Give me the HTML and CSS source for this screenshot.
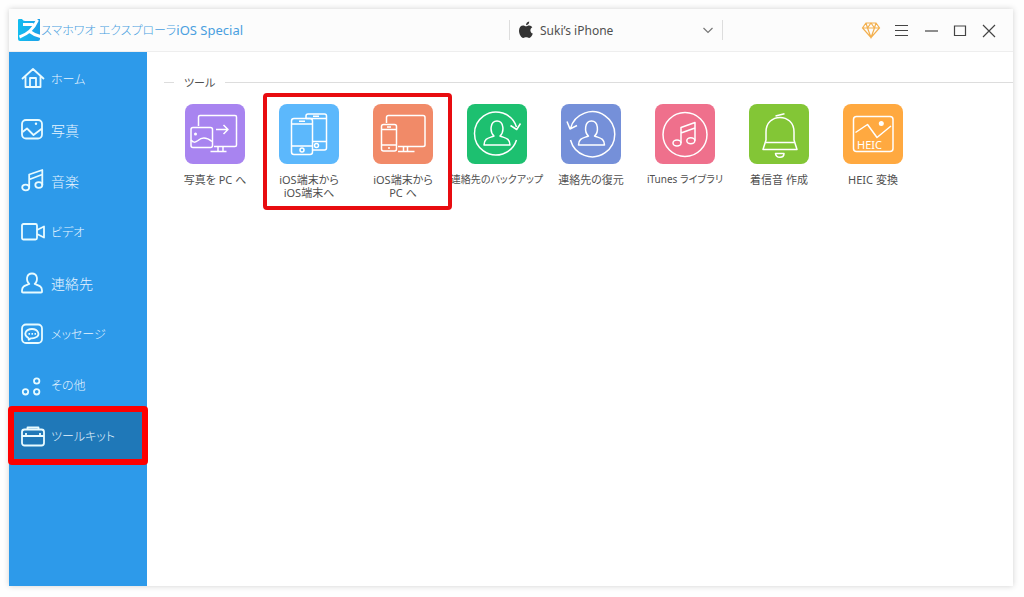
FILE: index.html
```html
<!DOCTYPE html>
<html lang="ja">
<head>
<meta charset="utf-8">
<meta name="viewport" content="width=device-width, initial-scale=1">
<title>スマホワオ エクスプローラ iOS Special</title>
<link rel="stylesheet" href="styles.css">
</head>
<body>
<div class="window">
  <header class="titlebar">
    <h1 class="brand">
      <svg class="brand-logo" viewBox="0 0 24 24" aria-hidden="true">
        <defs><linearGradient id="logo" x1="0" x2="1"><stop offset="0" stop-color="#12bdf0"/><stop offset="1" stop-color="#1ea0e8"/></linearGradient></defs>
        <path fill="url(#logo)" d="M1 2Q1 1 2 1H5Q6 3 8 3H18Q20 3 21 1H23V21Q23 23 21 23H3Q1 23 1 21Z"/>
        <path fill="none" stroke="#fff" stroke-width="3" d="M6 6.500H16.500M20.500 2C17 10 11 16 2.500 19M12 13Q17 17 23.500 18.500"/>
      </svg>
      <span class="compact">スマホワオ エクスプローラ</span>
      <span class="brand-edition">iOS Special</span>
    </h1>
    <div class="device">
      <svg class="device-logo" viewBox="0 0 16 18" aria-hidden="true"><path fill="#333" d="M11.200 0.500Q11.300 3.700 8 4.300Q8 1.300 11.200 0.500ZM8 5.300C9 5.300 9.700 4.500 11.200 4.500Q13.300 4.600 14.300 6.200C11.500 8 12 11.500 14.800 12.600C14 14.900 12.700 16.900 11.200 16.900C10 16.900 9.500 16.200 8.200 16.200S6.300 16.900 5.200 16.900C3.200 16.900 1 13.200 1 9.800C1 6.400 3 4.500 5.100 4.500C6.500 4.500 7.200 5.300 8 5.300Z"/></svg>
      <select class="device-select" aria-label="デバイス"><option>Suki’s iPhone</option></select>
      <svg class="device-arrow" viewBox="0 0 12 12" aria-hidden="true"><path fill="none" stroke="#777" stroke-width="1.200" d="M1.500 4L6 8.500L10.500 4"/></svg>
    </div>
    <div class="controls">
      <button class="control gem" aria-label="購入"><svg viewBox="0 0 20 20"><path d="M5 3H15L18.500 8L10 17.500L1.500 8ZM1.500 8H18.500M5 3L6.500 8L10 17.500L13.500 8L15 3M6.500 8L10 3L13.500 8"/></svg></button>
      <button class="control" aria-label="メニュー"><svg viewBox="0 0 20 20"><path d="M3 5.500H16M3 10.500H16M3 15.500H16"/></svg></button>
      <button class="control" aria-label="最小化"><svg viewBox="0 0 20 20"><path d="M4 11H17"/></svg></button>
      <button class="control" aria-label="最大化"><svg viewBox="0 0 20 20"><path d="M4.500 6H15.500V15.500H4.500Z"/></svg></button>
      <button class="control" aria-label="閉じる"><svg viewBox="0 0 20 20"><path d="M4 5L16 17M16 5L4 17"/></svg></button>
    </div>
  </header>
  <div class="body">
    <nav class="sidebar">
      <a class="nav-item compact" href="#home"><svg class="nav-icon" viewBox="0 0 24 24"><path d="M1 12L12 2L23 12M4.500 9.500V20H19.500V9.500M9 19.500V11H15V19.500"/></svg>ホーム</a>
      <a class="nav-item" href="#photo"><svg class="nav-icon" viewBox="0 0 24 24"><rect x="1" y="2" width="20" height="18.500" rx="4"/><path d="M1.500 14L6 10.500L12.500 17L21 10.500"/><circle class="solid" cx="15" cy="5.800" r="1.200"/></svg>写真</a>
      <a class="nav-item" href="#music"><svg class="nav-icon" viewBox="0 0 24 24"><ellipse cx="4.700" cy="18.500" rx="3.500" ry="2.800"/><ellipse cx="17.800" cy="16" rx="3.500" ry="2.800"/><path d="M8.200 18.500V5.500L21.300 1V16M8.200 10.500L21.300 5.500"/></svg>音楽</a>
      <a class="nav-item compact" href="#video"><svg class="nav-icon" viewBox="0 0 24 24"><rect x="1" y="4" width="15" height="15.500" rx="1.500"/><path d="M16 10L23 6.500V17.500L16 14"/></svg>ビデオ</a>
      <a class="nav-item" href="#contacts"><svg class="nav-icon" viewBox="0 0 24 24"><path d="M8.300 13C4.500 9.500 5.500 2.500 11 2.500S17.500 9.500 13.700 13C17.500 14.500 21 15 21 19.500V21Q21 21.500 20 21.500H2Q1 21.500 1 21V19.500C1 15 4.500 14.500 8.300 13Z"/></svg>連絡先</a>
      <a class="nav-item compact" href="#messages"><svg class="nav-icon" viewBox="0 0 24 24"><rect x="1" y="2.500" width="20" height="18.500" rx="4"/><path d="M7.500 16C1.500 12.500 5 7 11 7S20 13 14.500 15.500Q12.500 16.500 10 16.300L7.800 17.800Z"/><path d="M7.500 11.800H9M10.500 11.800H12M13.500 11.800H15"/></svg>メッセージ</a>
      <a class="nav-item compact" href="#other"><svg class="nav-icon" viewBox="0 0 24 24"><circle cx="15.700" cy="8" r="2.700"/><circle cx="4.500" cy="18.800" r="2.700"/><circle cx="15.700" cy="18.800" r="2.700"/></svg>その他</a>
      <a class="nav-item compact selected" href="#toolkit" aria-current="page"><svg class="nav-icon" viewBox="0 0 24 24"><rect x="1" y="5.500" width="22" height="16" rx="2.500"/><path d="M1 12H23M5 12V9M19 12V9M6.500 5.500V3.500H17.500V5.500"/></svg>ツールキット</a>
    </nav>
    <main class="content">
      <h2 class="section-title">ツール</h2>
      <div class="tools">
        <button class="tool"><svg class="tile purple" viewBox="0 0 60 60"><path d="M13.500 22V13Q13.500 11.500 15 11.500H50Q51.500 11.500 51.500 13V41Q51.500 42.500 50 42.500H29M33 43V47M38 43V47M25.500 47.500H41.500M31 25.500H43M38.500 21L43 25.500L38.500 30"/><rect x="6" y="23.500" width="21.500" height="20" rx="2"/><path d="M6 36Q9 40 13 36.500Q19 31 27 37.500"/><circle class="solid" cx="10.500" cy="30" r="1.500"/></svg><span class="label">写真を PC へ</span></button>
        <button class="tool"><svg class="tile sky" viewBox="0 0 60 60"><path d="M27 14V12Q27 10 29 10H45.500Q47.500 10 47.500 12V44Q47.500 46 45.500 46H33.500M27 14.500H47M33.500 37.500H47M34 12.200H40"/><circle cx="37.500" cy="41.500" r="2"/><rect x="12.500" y="14.500" width="21" height="36" rx="2.500"/><path d="M12.500 20H33.500M12.500 42H33.500M20 17.300H26"/><circle cx="23" cy="46" r="2"/></svg><span class="label">iOS端末から<br>iOS端末へ</span></button>
        <button class="tool"><svg class="tile orange" viewBox="0 0 60 60"><path d="M13.500 19V13.500Q13.500 11.500 15.500 11.500H50Q52 11.500 52 13.500V41Q52 42.500 50 42.500H25M30.500 43V47M34.500 43V47M25 47.500H41.500"/><rect x="8.500" y="20.500" width="15" height="26.500" rx="2"/><path d="M8.500 25.500H23.500M8.500 41H23.500M14 23H18"/><circle class="solid" cx="16" cy="44" r="1"/></svg><span class="label">iOS端末から<br>PC へ</span></button>
        <button class="tool"><svg class="tile green" viewBox="0 0 60 60"><path d="M49.500 23A21.500 21.500 0 1 0 49.500 36M43.500 21.500L49.700 25.500L53.500 19.500"/><path d="M27 32C22.500 28 23 17 30 17S37.500 28 33 32C37 34 43 33.500 43 41H17C17 33.500 23 34 27 32Z"/></svg><span class="label label-long">連絡先のバックアップ</span></button>
        <button class="tool"><svg class="tile indigo" viewBox="0 0 60 60"><path d="M9.500 24.500A22.500 22.500 0 1 1 9.500 36M6 17.500L9 25L16 21.500"/><path d="M27.500 32C23 28 23.500 17 30.500 17S38 28 33.500 32C37.500 34 43.500 33.500 43.500 41H17.500C17.500 33.500 23.500 34 27.500 32Z"/></svg><span class="label">連絡先の復元</span></button>
        <button class="tool"><svg class="tile pink" viewBox="0 0 60 60"><circle cx="30" cy="30.500" r="22"/><ellipse cx="22" cy="39" rx="4" ry="3"/><ellipse cx="35.800" cy="36.700" rx="4" ry="3"/><path d="M26 39V23.500L40 18.500V36.700M26 29L40 24"/></svg><span class="label label-long">iTunes ライブラリ</span></button>
        <button class="tool"><svg class="tile lime" viewBox="0 0 60 60"><path d="M14 45.500L17 36V28C17 8.500 45 8.500 45 28V36L48 45.500ZM16.500 38.500H45.500M26.500 12L35.500 9.700M26.500 49.500H35C35 54.500 27 54.500 26.500 49.500Z"/></svg><span class="label">着信音 作成</span></button>
        <button class="tool"><svg class="tile amber" viewBox="0 0 60 60"><rect x="10.500" y="12.500" width="39.500" height="35" rx="3"/><path d="M12.500 28.500L24.500 20.500L34 33.500L48 22"/><circle class="solid" cx="38.300" cy="19.500" r="2.500"/><text x="14" y="45">HEIC</text></svg><span class="label">HEIC 変換</span></button>
        <div class="tools-mark"></div>
      </div>
    </main>
  </div>
</div>
</body>
</html>
```
FILE: styles.css
```css
* { box-sizing: border-box; }

body {
  margin: 0;
  padding: 9px 11px 11px 9px;
  min-height: 100vh;
  display: flex;
  background: #fefefe;
  color: #505050;
  font-family: "Noto Sans", "Noto Sans CJK JP", sans-serif;
  font-feature-settings: "palt";
}

button, select {
  border: 0;
  padding: 0;
  background: none;
  color: inherit;
  font: inherit;
  font-feature-settings: inherit;
}

.window {
  flex: 1;
  display: flex;
  flex-direction: column;
  background: #fff;
  box-shadow: 0 0 6px rgba(0, 0, 0, 0.18);
}

.titlebar {
  height: 43px;
  display: grid;
  grid-template-columns: 50fr 214px 29fr;
  align-items: center;
  background: #fcfcfc;
  border-bottom: 1px solid #eee;
}

.brand {
  margin: 0;
  padding-left: 8px;
  display: flex;
  align-items: center;
  color: #4a9fe0;
  font-size: 13px;
  font-weight: 400;
  white-space: nowrap;
}

.brand-logo { width: 24px; height: 24px; }

.device {
  height: 20px;
  padding: 0 8px;
  display: flex;
  align-items: center;
  border: solid #ddd;
  border-width: 0 1px;
}

.device-logo { width: 16px; height: 18px; }

.device-select {
  flex: 1;
  padding-left: 6px;
  appearance: none;
  font-size: 12px;
}

.device-arrow { width: 12px; height: 12px; }

.controls {
  padding-right: 14px;
  display: flex;
  justify-content: flex-end;
  gap: 9px;
}

.control { width: 20px; height: 20px; }
.control svg { display: block; fill: none; stroke: #444; stroke-width: 1.2; }
.gem { margin-right: 2px; }
.gem svg { stroke: #f3b04f; }

.body { flex: 1; display: flex; }

.sidebar {
  width: 138px;
  padding-top: 1px;
  background: #2d9aea;
}

.nav-item {
  position: relative;
  height: 51px;
  padding-left: 12px;
  display: flex;
  align-items: center;
  gap: 6px;
  color: #e8f5ff;
  font-size: 14px;
  font-weight: 300;
  text-decoration: none;
  white-space: nowrap;
}

.compact {
  font-size: 12px;
  font-weight: 300;
}

.nav-icon {
  width: 24px;
  height: 24px;
  fill: none;
  stroke: #e8fbff;
  stroke-width: 1.8;
  stroke-linejoin: round;
}

.nav-icon .solid { fill: #e8fbff; stroke: none; }

.selected { background: #1f78b8; }

.selected::after {
  content: "";
  position: absolute;
  inset: -4px -1px;
  border: 6px solid #fe0000;
  border-radius: 4px;
}

.content { flex: 1; min-width: 0; }

.section-title {
  margin: 20px 0 0;
  padding-left: 17px;
  height: 20px;
  display: flex;
  align-items: center;
  gap: 10px;
  font-size: 11px;
  font-weight: 400;
}

.section-title::before,
.section-title::after {
  content: "";
  width: 10px;
  height: 1px;
  background: #ddd;
}

.section-title::after { flex: 1; }

.tools {
  position: relative;
  margin: 12px 0 0 21px;
  display: grid;
  grid-template-columns: repeat(auto-fill, 94px);
  row-gap: 16px;
}

.tool {
  display: flex;
  flex-direction: column;
  align-items: center;
  gap: 9px;
}

.tile {
  width: 60px;
  height: 60px;
  border-radius: 8px;
  fill: none;
  stroke: #fff;
  stroke-width: 1.5;
  stroke-linejoin: round;
}

.tile .solid { fill: #fff; stroke: none; }
.tile text { fill: #fff; stroke: none; font-size: 11px; }

.purple { background: #a884f0; }
.sky { background: #5cb8fc; }
.orange { background: #f18a68; }
.green { background: #1dc070; }
.indigo { background: #7590d9; }
.pink { background: #ef708c; }
.lime { background: #83c636; }
.amber { background: #ffa940; }

.label {
  font-size: 11px;
  line-height: 13px;
  white-space: nowrap;
}

.label-long { font-size: 10px; }

.tools-mark {
  position: absolute;
  left: 95px;
  top: -11px;
  width: 189px;
  height: 117px;
  border: 4px solid #e80c10;
  border-radius: 4px;
}
```
